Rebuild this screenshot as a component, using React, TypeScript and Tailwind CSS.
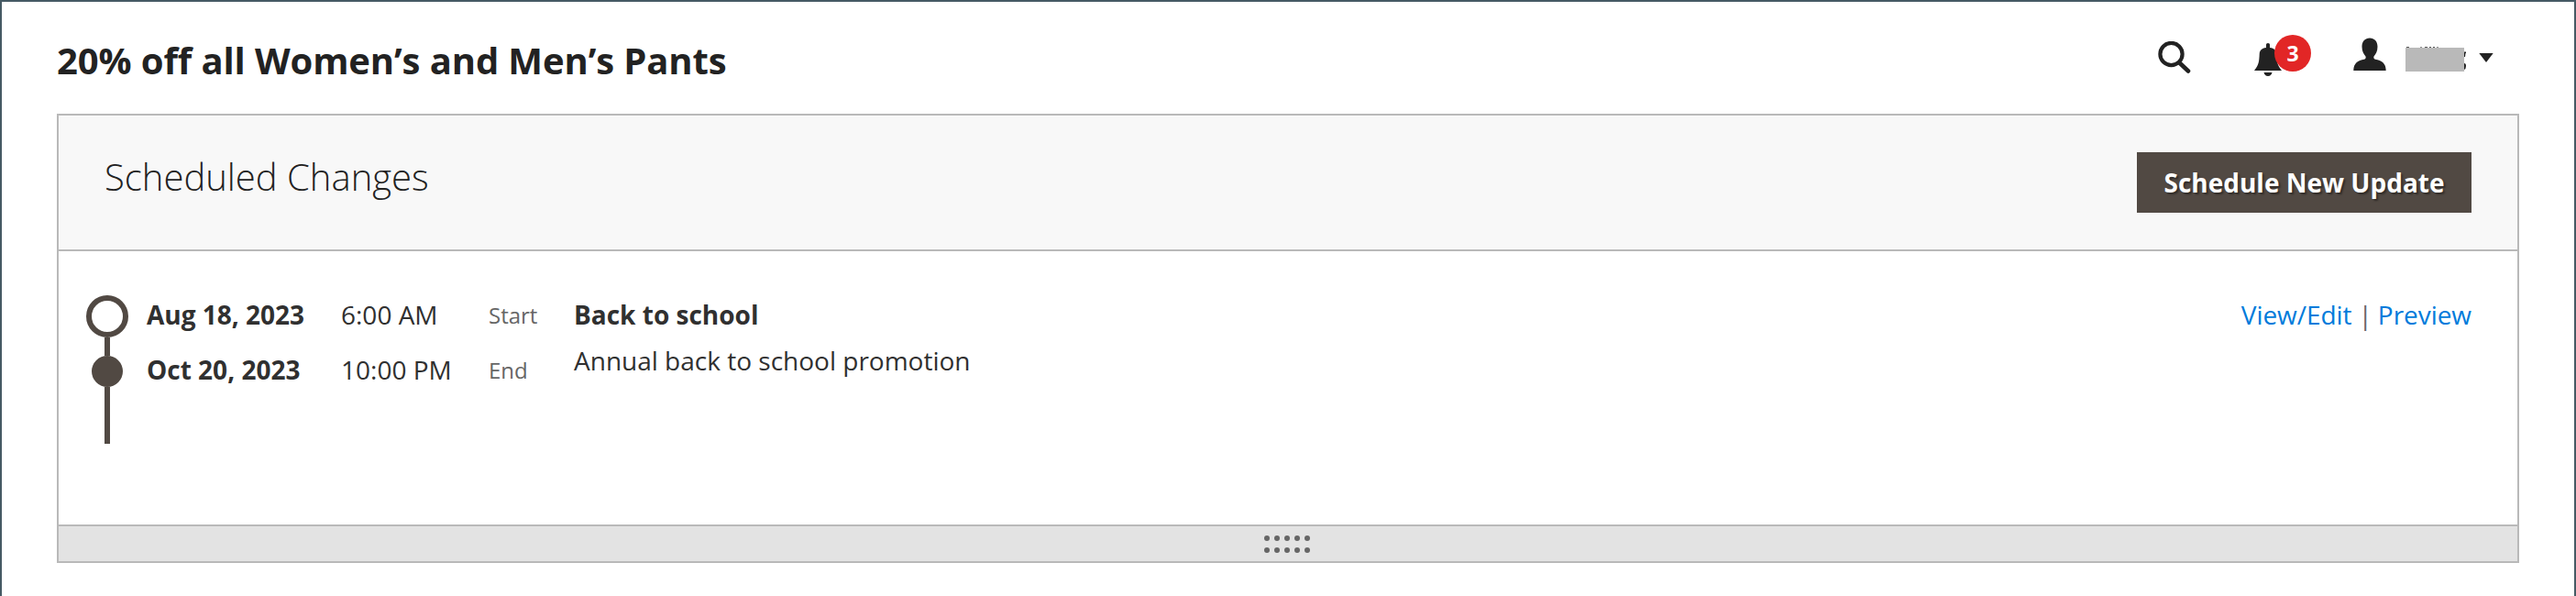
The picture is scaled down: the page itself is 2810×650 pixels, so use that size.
import React from 'react';

function SearchIcon() {
  return (
    <svg className="mt-[43px] block h-9 w-9" viewBox="0 0 36 36" fill="none" stroke="#222222">
      <circle cx="14.5" cy="14" r="12.1" strokeWidth="4.2" />
      <path d="M24 24 L33 32.5" strokeWidth="4.6" strokeLinecap="round" />
    </svg>
  );
}

function BellIcon() {
  return (
    <svg className="block h-9 w-[30px]" viewBox="0 0 30 36" fill="#222222">
      <path d="M13 5 V1.5 Q13 0 15 0 Q17 0 17 1.5 V5 C22 5.5 24 8 24.3 12 C24.6 20 25 24 30 30 H0 C5 24 5.4 20 5.7 12 C6 8 8 5.5 13 5 Z" />
      <path d="M10.5 32 H19.5 Q18.5 36 15 36 Q11.500 36 10.5 32 Z" />
    </svg>
  );
}

function UserIcon() {
  return (
    <svg className="block h-9 w-9" viewBox="0 0 36 36" fill="#222222">
      <path d="M18 0.500 C23 0.500 26.500 4 26.500 10 C26.500 15 24.500 18 22.500 20.500 C22 22 22.500 23.500 24 23.800 C31 25 35.700 28 35.700 36 H0.300 C0.300 28 5 25 12 23.800 C13.500 23.500 14 22 13.500 20.500 C11.500 18 9.500 15 9.500 10 C9.500 4 13 0.500 18 0.500 Z" />
    </svg>
  );
}

function MaskedName() {
  return (
    <svg className="ml-[21px] mt-[49px] block h-[27px] w-[67px]" viewBox="0 0 67 27">
      <path d="M1 0.300 H4 V1 H1 Z M16 0.500 H18 V1 H16 Z M21 0.200 H24 V1 H21 Z M26 0.200 H28 V1 H26 Z M30 0.200 H32 V1 H30 Z M34 0.500 H36 V1 H34 Z" fill="#222222" />
      <path d="M64 5.500 H66 V7 H65.500 L65 11 H64 Z M64 18 Q66 18 66 21 Q66 24 64 25 Z" fill="#222222" />
      <rect x="0" y="1" width="64" height="26" fill="#b9b9b9" />
    </svg>
  );
}

function Header() {
  return (
    <header className="flex h-[122px] items-start pl-[60px] pr-[88px] text-[#222222]">
      <h1 className="mt-10 text-[40px] leading-[48px] font-bold tracking-[-0.11px] whitespace-nowrap">
        20% off all Women’s and Men’s Pants
      </h1>
      <div className="ml-auto flex items-start">
        <SearchIcon />
        <div className="relative ml-[69px] mt-[45px]">
          <BellIcon />
          <span className="absolute left-[22px] -top-[9px] flex h-10 w-10 items-center justify-center rounded-full bg-[#e22626] text-[23px] leading-none font-bold text-white">
            3
          </span>
        </div>
        <div className="ml-[78px] mt-[39px]">
          <UserIcon />
        </div>
        <MaskedName />
        <svg className="ml-[13px] mt-14 block h-[10px] w-4" viewBox="0 0 16 10" fill="#222222">
          <path d="M0.300 0 H15.700 L8 10 Z" />
        </svg>
      </div>
    </header>
  );
}

function Timeline() {
  return (
    <div className="flex w-[46px] flex-col items-center">
      <div className="h-[46px] w-[46px] rounded-full border-[6px] border-[#514943]" />
      <div className="h-5 w-1.5 bg-[#514943]" />
      <div className="h-[34px] w-[34px] rounded-full bg-[#514943]" />
      <div className="h-[62px] w-1.5 bg-[#514943]" />
    </div>
  );
}

function DateRow({ date, time, label }: { date: string; time: string; label: string }) {
  return (
    <div className="flex h-[60px] items-start whitespace-nowrap">
      <span className="w-[212px] font-bold">{date}</span>
      <span className="w-[161px]">{time}</span>
      <span className="w-[93px] pt-px text-[24px] text-[#666666]">{label}</span>
    </div>
  );
}

export default function App() {
  return (
    <div className="h-[650px] w-[2810px] overflow-hidden border-x-2 border-t-2 border-[#465a64] bg-white font-['Open_Sans',sans-serif]">
      <Header />
      <section className="ml-[60px] flex h-[490px] w-[2686px] flex-col border-2 border-[#b9b9b9]">
        <div className="flex h-[148px] items-start border-b-2 border-[#b9b9b9] bg-[#f8f8f8] pl-[50px] pr-[50px]">
          <h2 className="mt-[43px] text-[40px] leading-[48px] font-light text-[#222222]">Scheduled Changes</h2>
          <button className="ml-auto mt-10 flex h-[66px] w-[365px] items-center justify-center bg-[#514943] text-[28px] leading-[38px] font-bold whitespace-nowrap text-white [text-shadow:2px_2px_2px_rgba(0,0,0,0.4)]">
            Schedule New Update
          </button>
        </div>
        <div className="flex flex-1 items-start pl-[30px] pr-[50px] pt-12 text-[28px] leading-[38px] text-[#303030]">
          <Timeline />
          <div className="ml-5 mt-0.5">
            <DateRow date="Aug 18, 2023" time="6:00 AM" label="Start" />
            <DateRow date="Oct 20, 2023" time="10:00 PM" label="End" />
          </div>
          <div className="mt-0.5 whitespace-nowrap">
            <p className="mb-3 font-bold">Back to school</p>
            <p>Annual back to school promotion</p>
          </div>
          <div className="ml-auto mt-0.5 flex whitespace-nowrap tracking-[-0.05px]">
            <a className="text-[#007bdb]">View/Edit</a>
            <span className="ml-[7px] mr-1.5 text-[#666666]">|</span>
            <a className="text-[#007bdb]">Preview</a>
          </div>
        </div>
        <div className="flex h-10 flex-col items-center border-t-2 border-[#b9b9b9] bg-[#e3e3e3] pt-[10px]">
          <div className="mr-0.5 grid grid-cols-5 gap-x-[5px] gap-y-[7px]">
            {Array.from({ length: 10 }, (_, i) => (
              <span key={i} className="h-1.5 w-1.5 rounded-full bg-[#666666]" />
            ))}
          </div>
        </div>
      </section>
    </div>
  );
}
